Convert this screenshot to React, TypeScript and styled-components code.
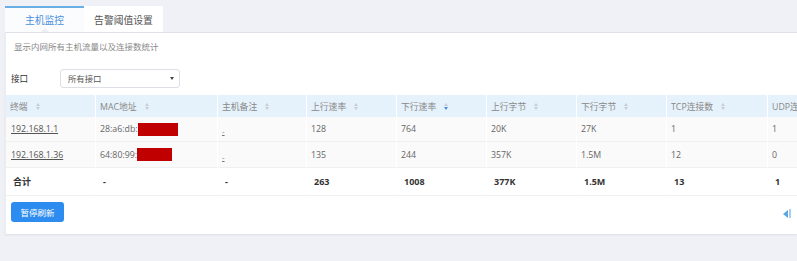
import React from "react";
import styled, { createGlobalStyle } from "styled-components";

const Global = createGlobalStyle`
  html, body { margin: 0; padding: 0; }
  body {
    background: #f0f1f6;
    font-family: "Open Sans", "Noto Sans CJK SC", sans-serif;
    overflow: hidden;
  }
`;

const Page = styled.div`
  width: 797px;
  height: 261px;
  padding: 6px 0 0 5px;
  box-sizing: border-box;
  display: flex;
  flex-direction: column;
  overflow: hidden;
`;

const TabBar = styled.div`
  display: flex;
  height: 26px;
  position: relative;
  z-index: 1;
`;

const Tab = styled.div<{ $active?: boolean }>`
  width: 79px;
  height: 26px;
  box-sizing: border-box;
  display: flex;
  align-items: center;
  justify-content: center;
  font-size: 9.8px;
  color: ${(p) => (p.$active ? "#4a8fdc" : "#555")};
  background: ${(p) => (p.$active ? "#fbfcfe" : "#ffffff")};
  border-top: 2px solid ${(p) => (p.$active ? "#6aaee6" : "transparent")};
  position: relative;
  padding-bottom: 1px;
`;

const Caret = styled.span`
  position: absolute;
  left: 50%;
  bottom: 0;
  transform: translateX(-50%);
  width: 0;
  height: 0;
  border-left: 4px solid transparent;
  border-right: 4px solid transparent;
  border-bottom: 4px solid #eceef2;
`;

const Panel = styled.div`
  background: #ffffff;
  border-top: 1px solid #dfe1ea;
  border-left: 1px solid #eceef2;
  height: 202px;
  box-sizing: border-box;
  box-shadow: 0 1px 2px rgba(0, 0, 0, 0.08);
  display: flex;
  flex-direction: column;
  overflow: hidden;
`;

const Subtitle = styled.div`
  font-size: 8.5px;
  line-height: 12px;
  color: #888;
  padding: 8px 0 0 8px;
`;

const FilterRow = styled.div`
  display: flex;
  align-items: center;
  margin-top: 15px;
  height: 20px;
`;

const Label = styled.div`
  font-size: 8.6px;
  color: #333;
  width: 49px;
  padding-left: 5px;
`;

const Select = styled.div`
  width: 120px;
  height: 19px;
  box-sizing: border-box;
  border: 1px solid #dcdfe6;
  border-radius: 3px;
  display: flex;
  align-items: center;
  justify-content: space-between;
  padding: 0 5px 0 7px;
  font-size: 8.4px;
  color: #555;
`;

const Arrow = styled.span`
  width: 0;
  height: 0;
  border-left: 2.5px solid transparent;
  border-right: 2.5px solid transparent;
  border-top: 3.5px solid #444;
`;

const TableWrap = styled.div`
  margin-top: 7px;
  overflow: hidden;
  width: 100%;
`;

const Table = styled.div`
  display: grid;
  grid-template-columns: 90px 122px 89px 90px 90px 90px 90px 101px 90px;
  width: 852px;
`;

const HeadCell = styled.div`
  height: 22px;
  background: #e6f2fb;
  border-right: 1.5px solid #ffffff;
  box-sizing: border-box;
  display: flex;
  align-items: center;
  padding-left: 4px;
  font-size: 8.8px;
  color: #888;
  white-space: nowrap;
`;

const SortIcon = styled.span`
  display: inline-flex;
  flex-direction: column;
  margin-left: 8px;
  gap: 1px;
`;

const Tri = styled.span<{ $up?: boolean; $on?: boolean }>`
  width: 0;
  height: 0;
  border-left: 2.5px solid transparent;
  border-right: 2.5px solid transparent;
  ${(p) =>
    p.$up
      ? `border-bottom: 3px solid ${p.$on ? "#4a90e2" : "#c8ccd2"};`
      : `border-top: 3px solid ${p.$on ? "#4a90e2" : "#c8ccd2"};`}
`;

const Cell = styled.div<{ $row: "a" | "b" | "t" }>`
  height: ${(p) => (p.$row === "t" ? "28px" : p.$row === "a" ? "25px" : "26px")};
  box-sizing: border-box;
  display: flex;
  align-items: center;
  padding-left: ${(p) => (p.$row === "t" ? "7px" : "4px")};
  font-size: ${(p) => (p.$row === "t" ? "9px" : "8.8px")};
  font-weight: ${(p) => (p.$row === "t" ? 700 : 400)};
  color: ${(p) => (p.$row === "t" ? "#333" : "#666")};
  background: ${(p) => (p.$row === "t" ? "#ffffff" : "#fafafa")};
  border-right: 1.5px solid #ffffff;
  border-bottom: 1px solid #f0f0f0;
  white-space: nowrap;
`;

const Link = styled.span`
  text-decoration: underline;
  color: #555;
  padding-left: 1px;
`;

const Dash = styled.span`
  text-decoration: underline;
  color: #777;
  font-size: 8px;
  margin-top: 3px;
`;

const Redact = styled.span<{ $w: number }>`
  display: inline-block;
  width: ${(p) => p.$w}px;
  height: 13px;
  background: #c00000;
  margin-left: 0px;
`;

const Footer = styled.div`
  display: flex;
  align-items: center;
  justify-content: space-between;
  padding: 6px 6px 0 5px;
`;

const Button = styled.button`
  width: 53px;
  height: 20px;
  border: none;
  border-radius: 3px;
  background: #2d8cf0;
  color: #fff;
  font-family: inherit;
  font-size: 8.5px;
  padding: 0;
  cursor: pointer;
`;

const ScrollNub = styled.div`
  display: flex;
  align-items: center;
  gap: 1px;
  margin-top: 3px;
`;

const NubTri = styled.span`
  width: 0;
  height: 0;
  border-top: 4px solid transparent;
  border-bottom: 4px solid transparent;
  border-right: 5px solid #5aa7e6;
`;

const NubBar = styled.span`
  width: 2px;
  height: 9px;
  background: #a9d0f0;
`;

const headers = [
  "终端",
  "MAC地址",
  "主机备注",
  "上行速率",
  "下行速率",
  "上行字节",
  "下行字节",
  "TCP连接数",
  "UDP连接数",
];

const Sort = ({ down }: { down?: boolean }) => (
  <SortIcon>
    <Tri $up />
    <Tri $on={down} />
  </SortIcon>
);

const rows = [
  { ip: "192.168.1.1", mac: "28:a6:db:", w: 40, up: "128", down: "764", ub: "20K", db: "27K", tcp: "1", udp: "1" },
  { ip: "192.168.1.36", mac: "64:80:99:", w: 35, up: "135", down: "244", ub: "357K", db: "1.5M", tcp: "12", udp: "0" },
];

export default function App() {
  return (
    <>
      <Global />
      <Page>
        <TabBar>
          <Tab $active>
            主机监控
            <Caret />
          </Tab>
          <Tab>告警阈值设置</Tab>
        </TabBar>
        <Panel>
          <Subtitle>显示内网所有主机流量以及连接数统计</Subtitle>
          <FilterRow>
            <Label>接口</Label>
            <Select>
              <span>所有接口</span>
              <Arrow />
            </Select>
          </FilterRow>
          <TableWrap>
            <Table>
              {headers.map((h, i) => (
                <HeadCell key={h}>
                  {h}
                  {i < 8 && <Sort down={i === 4} />}
                </HeadCell>
              ))}
              {rows.map((r, idx) => {
                const k = idx === 0 ? "a" : "b";
                return (
                  <React.Fragment key={r.ip}>
                    <Cell $row={k}>
                      <Link>{r.ip}</Link>
                    </Cell>
                    <Cell $row={k}>
                      {r.mac}
                      <Redact $w={r.w} />
                    </Cell>
                    <Cell $row={k}>
                      <Dash>-</Dash>
                    </Cell>
                    <Cell $row={k}>{r.up}</Cell>
                    <Cell $row={k}>{r.down}</Cell>
                    <Cell $row={k}>{r.ub}</Cell>
                    <Cell $row={k}>{r.db}</Cell>
                    <Cell $row={k}>{r.tcp}</Cell>
                    <Cell $row={k}>{r.udp}</Cell>
                  </React.Fragment>
                );
              })}
              {["合计", "-", "-", "263", "1008", "377K", "1.5M", "13", "1"].map((v, i) => (
                <Cell $row="t" key={i}>
                  {v}
                </Cell>
              ))}
            </Table>
          </TableWrap>
          <Footer>
            <Button>暂停刷新</Button>
            <ScrollNub>
              <NubTri />
              <NubBar />
            </ScrollNub>
          </Footer>
        </Panel>
      </Page>
    </>
  );
}
